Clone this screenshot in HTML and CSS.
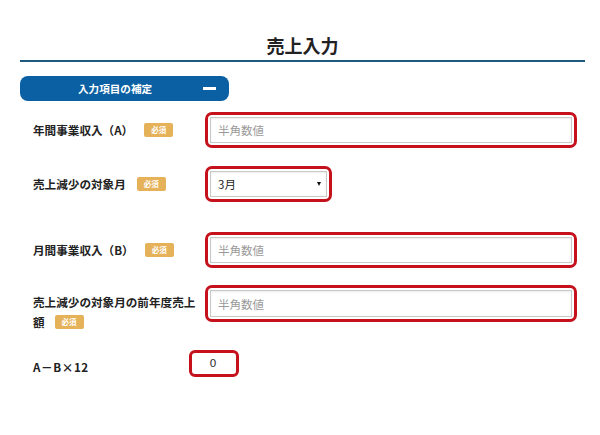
FILE: index.html
```html
<!DOCTYPE html>
<html lang="ja">
<head>
<meta charset="utf-8">
<title>売上入力</title>
<link rel="stylesheet" href="styles.css">
</head>
<body>
<div class="page">
  <h1 class="title">売上入力</h1>
  <div class="pill">
    <span class="pill-text">入力項目の補定</span>
    <span class="pill-minus"></span>
  </div>

  <div class="row row-1">
    <div class="label">年間事業収入（A）<span class="badge">必須</span></div>
    <div class="ring ring-wide"><input class="field" type="text" placeholder="半角数値"></div>
  </div>

  <div class="row row-2">
    <div class="label">売上減少の対象月<span class="badge">必須</span></div>
    <div class="ring ring-select">
      <div class="field select-box">
        <select class="select"><option>3月</option></select>
        <span class="caret"></span>
      </div>
    </div>
  </div>

  <div class="row row-3">
    <div class="label">月間事業収入（B）<span class="badge">必須</span></div>
    <div class="ring ring-wide"><input class="field" type="text" placeholder="半角数値"></div>
  </div>

  <div class="row row-4">
    <div class="label label-wrap">
      <div class="label-line">売上減少の対象月の前年度売上</div>
      <div class="label-line label-line-2"><span>額</span><span class="badge">必須</span></div>
    </div>
    <div class="ring ring-wide ring-tall"><input class="field" type="text" placeholder="半角数値"></div>
  </div>

  <div class="row row-5">
    <div class="label label-calc">A－B×12</div>
    <div class="ring ring-result"><span class="result">0</span></div>
  </div>
</div>
</body>
</html>
```
FILE: styles.css
```css
* { box-sizing: border-box; }
html, body { margin: 0; padding: 0; background: #fff; }
body {
  font-family: "Noto Sans CJK JP", "Noto Sans", sans-serif;
  color: #222;
}
.page {
  width: 600px;
  padding: 0 15px 0 20px;
}
.title {
  margin: 0;
  padding: 33px 0 3px;
  line-height: 24px;
  font-size: 18px;
  font-weight: bold;
  text-align: center;
  color: #222;
  border-bottom: 2px solid #1d5a7e;
}
.pill {
  margin-top: 14px;
  width: 209px;
  height: 25px;
  border-radius: 8px;
  background: #0b5fa3;
  display: flex;
  align-items: center;
  color: #fff;
}
.pill-text {
  margin-left: 58px;
  font-size: 10.6px;
  font-weight: bold;
}
.pill-minus {
  margin-left: auto;
  margin-right: 13px;
  width: 13px;
  height: 2.5px;
  background: #fff;
}
.row {
  display: flex;
  align-items: center;
}
.row-1 { margin-top: 11px; }
.row-2 { margin-top: 18px; }
.row-3 { margin-top: 30px; }
.row-4 { margin-top: 17px; align-items: flex-start; }
.row-5 { margin-top: 18px; align-items: flex-end; }
.label {
  width: 185px;
  padding-left: 13px;
  padding-right: 2px;
  font-size: 11.6px;
  font-weight: bold;
  line-height: 20px;
  color: #222;
}
.label-wrap { padding-top: 7px; }
.label-line { white-space: nowrap; line-height: 20px; }
.label-line-2 { display: flex; align-items: center; }
.label-calc { width: 169px; letter-spacing: 0.6px; }
.badge {
  display: inline-block;
  vertical-align: middle;
  margin-left: 11px;
  margin-top: -3px;
  width: 29px;
  height: 14px;
  line-height: 14px;
  border-radius: 2px;
  background: #e5b25a;
  color: #fff;
  font-size: 7.5px;
  font-weight: bold;
  text-align: center;
  overflow: hidden;
}
.label-line-2 .badge { margin: 0 0 0 10px; }
.ring {
  border: 3px solid #c4111b;
  border-radius: 7px;
  padding: 2px;
  background: #fff;
}
.ring-wide { width: 372px; height: 36px; }
.ring-tall { height: 37px; }
.ring-select { width: 127px; height: 36px; }
.ring-result {
  width: 50px;
  height: 27px;
  display: flex;
  align-items: center;
  justify-content: center;
  border-radius: 6px;
}
.result {
  font-size: 11px;
  color: #333;
  font-family: "DejaVu Sans", sans-serif;
  margin-left: -2px;
}
.field {
  display: block;
  width: 100%;
  height: 100%;
  border: 1px solid #c9c9c9;
  box-shadow: inset 0 1px 2px rgba(0,0,0,0.08);
  padding: 0 7px;
  font-family: "Noto Sans CJK JP", sans-serif;
  font-size: 11.5px;
  color: #333;
  background: #fff;
  outline: none;
}
.field::placeholder { color: #9a9a9a; }
.select-box {
  display: flex;
  align-items: center;
  padding-right: 5px;
}
.select {
  flex: 1;
  appearance: none;
  -webkit-appearance: none;
  border: none;
  background: transparent;
  font-family: "Noto Sans CJK JP", sans-serif;
  font-size: 11.5px;
  color: #222;
  padding: 0;
  outline: none;
}
.caret {
  width: 0;
  height: 0;
  border-left: 2.5px solid transparent;
  border-right: 2.5px solid transparent;
  border-top: 4px solid #111;
}
```
